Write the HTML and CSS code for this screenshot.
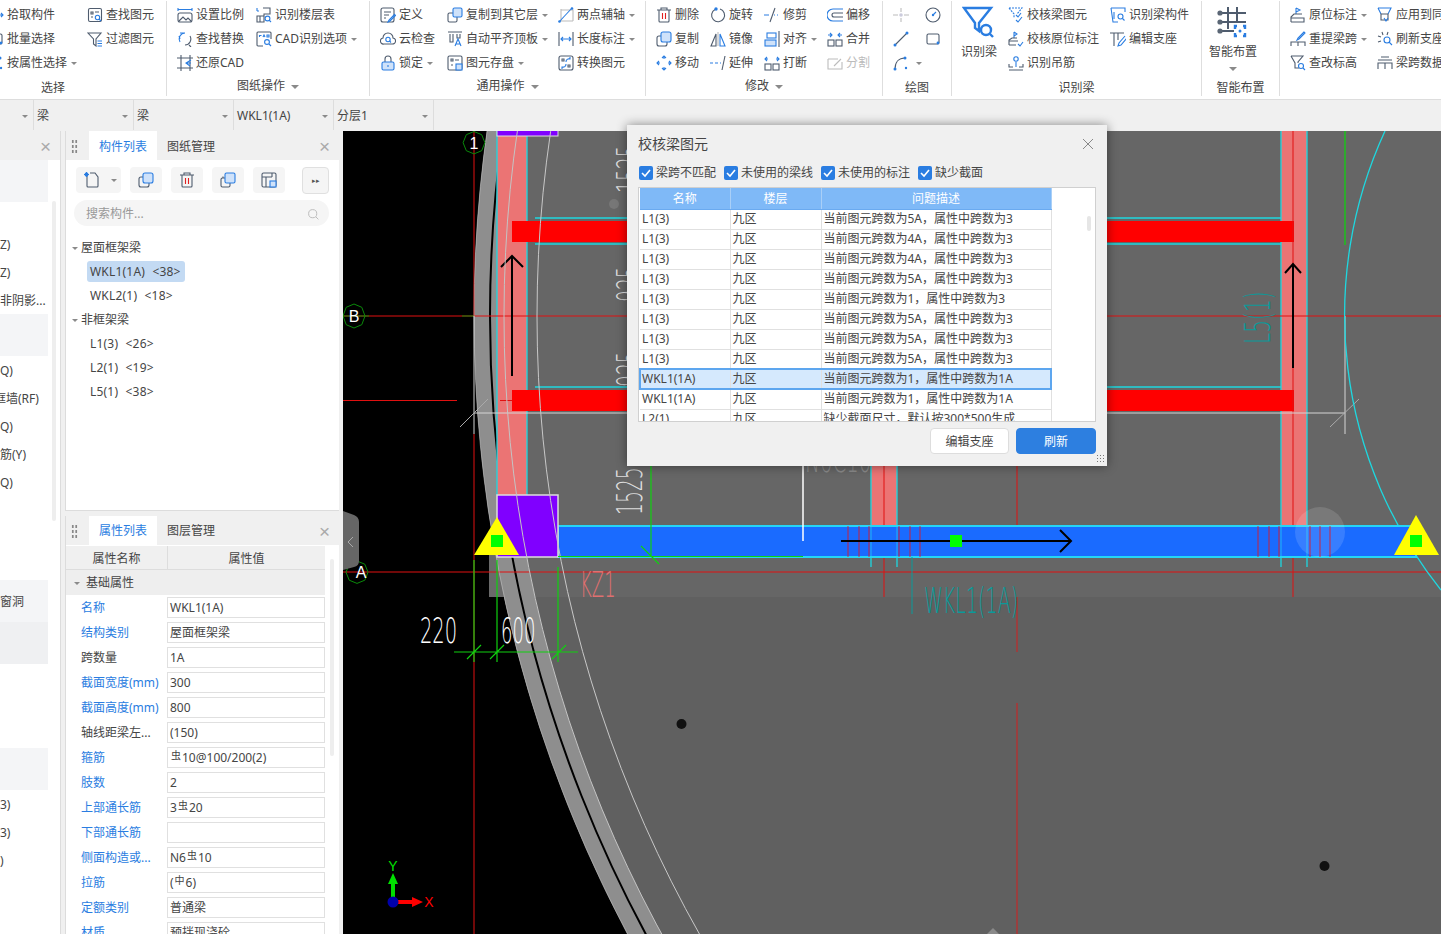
FILE: index.html
```html
<!DOCTYPE html>
<html lang="zh">
<head>
<meta charset="utf-8">
<title>校核梁图元</title>
<link rel="stylesheet" href="styles.css">
</head>
<body>
<svg class="defs" xmlns="http://www.w3.org/2000/svg">
<symbol id="i-find" viewBox="0 0 16 16"><rect class="d" x="1.500" y="1.500" width="13" height="13" rx="1.500"/><path class="d" d="M4 5h2v2H4zM8 5h4M4 10h2"/><circle class="b" cx="10.500" cy="10.500" r="2.200"/><path class="b" d="M12 12l2 2"/></symbol>
<symbol id="i-filter" viewBox="0 0 16 16"><path class="d" d="M1 2h13L9 8v7L6.500 13V8z"/><path class="b" d="M10.500 10h4.500M10.500 12.500h4.500M10.500 15h4.500"/></symbol>
<symbol id="i-scale" viewBox="0 0 16 16"><path class="b" d="M1 1v3M15 1v3M1 2.500h14"/><rect class="d" x="1" y="6" width="14" height="9" rx="2"/><path class="d" d="M2 14l4-4 3 3 2-2 3 3"/></symbol>
<symbol id="i-replace" viewBox="0 0 16 16"><path class="b" d="M8 2A6 6 0 0 0 3 11M2 5l1 3M3 2l5 0"/><path class="d" d="M8 14a6 6 0 0 0 5-9M12 14l2 2"/></symbol>
<symbol id="i-floor" viewBox="0 0 16 16"><path class="b" d="M1 1v3M1 4h2"/><path class="d" d="M7 1h7v6H8v8H1V9h7M4 9v6"/><circle class="b" cx="11.500" cy="11.500" r="2.400"/><path class="b" d="M13 13l2 2"/></symbol>
<symbol id="i-cad" viewBox="0 0 16 16"><path class="d" d="M7 15H2a1 1 0 0 1-1-1V2a1 1 0 0 1 1-1h12a1 1 0 0 1 1 1v6"/><path class="b" d="M3.500 6V4.500h2M7 6l1-2 1 2M11 4v2h2V4z"/><circle class="b" cx="11" cy="11" r="2.400"/><path class="b" d="M13 13l2 2"/></symbol>
<symbol id="i-restore" viewBox="0 0 16 16"><path class="d" d="M4 0v16M0 3h16M13 0v16M0 13h16"/><path class="b" d="M14 5L9 8l4 3M9 8h5"/></symbol>
<symbol id="i-define" viewBox="0 0 16 16"><rect class="d" x="1" y="1" width="13" height="14" rx="2"/><path class="d" d="M4 5h7M4 8h5M4 11h2"/><path class="b" d="M15 7l-6 6-1 2 2-1 6-6"/></symbol>
<symbol id="i-cloud" viewBox="0 0 16 16"><path class="d" d="M4 13a3 3 0 0 1-1-6 5 5 0 0 1 10 0 3 3 0 0 1-1 6z"/><circle class="b" cx="8" cy="8.500" r="2.200"/><path class="b" d="M9.500 10l1.500 1.500"/></symbol>
<symbol id="i-lock" viewBox="0 0 16 16"><path class="d" d="M5 7V4a3 3 0 0 1 6 0v3"/><rect class="l" x="2" y="7" width="12" height="8" rx="1.500"/><path class="b" d="M8 10v2"/></symbol>
<symbol id="i-copyto" viewBox="0 0 16 16"><rect class="d" x="1" y="6" width="9" height="9" rx="1.500"/><rect class="l" x="6" y="1" width="9" height="9" rx="1.500"/></symbol>
<symbol id="i-auto" viewBox="0 0 16 16"><path class="d" d="M1 1h14M3 3v8h3V3M10 3v4h3V3"/><path class="b" d="M8 15l3-7 3 7M9 13h4"/></symbol>
<symbol id="i-save" viewBox="0 0 16 16"><rect class="d" x="1" y="1" width="14" height="14" rx="1.500"/><path class="d" d="M4 4h2v2H4zM8 5h4M4 10h2"/><rect class="l" x="9" y="9" width="6" height="6"/></symbol>
<symbol id="i-twopt" viewBox="0 0 16 16"><path class="g" d="M2 14h13M3 2v12M3 3h12v11"/><path class="b" d="M1 15L14 1"/><circle class="bf" cx="1.500" cy="14.500" r="1.300"/><circle class="bf" cx="14" cy="1.500" r="1.300"/></symbol>
<symbol id="i-dim" viewBox="0 0 16 16"><path class="d" d="M1 1v14M15 1v14"/><path class="b" d="M3 8h10M5 6L3 8l2 2M11 6l2 2-2 2"/></symbol>
<symbol id="i-convert" viewBox="0 0 16 16"><rect class="d" x="1" y="1" width="14" height="14" rx="2"/><path class="d" d="M4 4h2v2H4zM10 10h2v2h-2z"/><path class="b" d="M8 7a3 3 0 0 1 4-3M12 2v2h-2M8 9a3 3 0 0 1-4 3M4 14v-2h2"/></symbol>
<symbol id="i-del" viewBox="0 0 16 16"><path class="d" d="M1 3h14M5 3V1h6v2M3 3v11a1 1 0 0 0 1 1h8a1 1 0 0 0 1-1V3"/><path class="r" d="M6.500 6v6M9.500 6v6"/></symbol>
<symbol id="i-rotate" viewBox="0 0 16 16"><path class="d" d="M10 2a6.500 6.500 0 1 1-5 .5"/><circle class="bf" cx="6" cy="2" r="1.700"/></symbol>
<symbol id="i-trim" viewBox="0 0 16 16"><path class="d" d="M11 1L6 15"/><path class="b" d="M0 8h5M10 8h1M13 8h1"/></symbol>
<symbol id="i-offset" viewBox="0 0 16 16"><path class="b" d="M16 2H6a6 6 0 0 0 0 12h10"/><path class="d" d="M16 6H7a2 2 0 0 0 0 4h9"/></symbol>
<symbol id="i-copy" viewBox="0 0 16 16"><rect class="d" x="1" y="5" width="10" height="10" rx="2"/><rect class="l" x="5" y="1" width="10" height="10" rx="2"/></symbol>
<symbol id="i-mirror" viewBox="0 0 16 16"><path class="g" d="M8 1v14"/><path class="d" d="M6 3L1 15h5z"/><path class="b" d="M10 3l5 12h-5z"/></symbol>
<symbol id="i-align" viewBox="0 0 16 16"><path class="d" d="M15 0v16"/><rect class="b" x="3" y="2" width="9" height="5"/><rect class="l" x="1" y="9" width="11" height="6"/></symbol>
<symbol id="i-merge" viewBox="0 0 16 16"><rect class="d" x="1" y="9" width="6" height="6"/><rect class="d" x="9" y="9" width="6" height="6"/><path class="b" d="M3 2l2 2-2 2M13 2l-2 2 2 2M1 4h4M15 4h-4"/></symbol>
<symbol id="i-move" viewBox="0 0 16 16"><path class="b" d="M8 1v3M8 12v3M1 8h3M12 8h3M6 3l2-2 2 2M6 13l2 2 2-2M3 6L1 8l2 2M13 6l2 2-2 2"/></symbol>
<symbol id="i-extend" viewBox="0 0 16 16"><path class="b" d="M0 8h3M5 8h3M10 8h1"/><path class="d" d="M15 1l-3 14"/></symbol>
<symbol id="i-break" viewBox="0 0 16 16"><rect class="d" x="1" y="9" width="6" height="6"/><rect class="d" x="9" y="9" width="6" height="6"/><path class="b" d="M3 2L1 4l2 2M13 2l2 2-2 2M1 4h3M15 4h-3"/></symbol>
<symbol id="i-split" viewBox="0 0 16 16"><path class="g" d="M1 4h10M1 4v10h14V7M7 11l7-7"/></symbol>
<symbol id="i-pt" viewBox="0 0 16 16"><path class="g" d="M0 8h5M11 8h5M8 1v4M8 11v4"/><circle cx="8" cy="8" r="1.800" fill="#ccd"/></symbol>
<symbol id="i-circle" viewBox="0 0 16 16"><circle class="d" cx="8" cy="8" r="7"/><path class="b" d="M8 8l3-3"/><circle class="bf" cx="8" cy="8" r="1.200"/></symbol>
<symbol id="i-line" viewBox="0 0 16 16"><path class="d" d="M2 14L14 2"/><circle class="bf" cx="2" cy="14" r="1.500"/><circle class="bf" cx="14" cy="2" r="1.500"/></symbol>
<symbol id="i-rect" viewBox="0 0 16 16"><rect class="d" x="2" y="3" width="12" height="10" rx="1.500"/><circle class="bf" cx="13" cy="12" r="1.400"/></symbol>
<symbol id="i-arc" viewBox="0 0 16 16"><path class="d" d="M2 14C2 7 6 3 12 3"/><circle class="bf" cx="2" cy="14" r="1.500"/><circle class="bf" cx="12" cy="3" r="1.500"/><circle class="bf" cx="13" cy="13" r="1.200"/></symbol>
<symbol id="i-bigfilter" viewBox="0 0 32 32"><path class="bt" d="M2 2h27L17 17v8L13 22V17z"/><circle class="bt" cx="24" cy="24" r="5"/><path class="bt" d="M28 28l3 3"/></symbol>
<symbol id="i-chk1" viewBox="0 0 16 16"><path class="bd" d="M1 1h13L9 7"/><path class="bd" d="M1 1l5 6v4"/><path class="b" d="M8 13l2 2 4-5M8 8l2 2 3-4"/></symbol>
<symbol id="i-chk2" viewBox="0 0 16 16"><path class="b" d="M6 1v6M6 1l3 2-3 2"/><path class="d" d="M1 14V9l3-2h5M1 10h9M1 14h7"/><path class="b" d="M10 13l2 2 3-4"/></symbol>
<symbol id="i-hang" viewBox="0 0 16 16"><circle class="b" cx="8" cy="4" r="2.200"/><path class="b" d="M8 7v5"/><path class="d" d="M1 9v3h4M15 9v3h-4M1 15h14"/></symbol>
<symbol id="i-beamq" viewBox="0 0 16 16"><path class="b" d="M1 1h14v4M1 1l2 14h5M4 5v7"/><circle class="b" cx="10.500" cy="9.500" r="2.500"/><path class="b" d="M12.500 11.500l2 2"/></symbol>
<symbol id="i-editseat" viewBox="0 0 16 16"><path class="d" d="M0 2h14M4 2v13M8 2v7"/><path class="b" d="M15 5l-6 7-1 3 3-1 6-7"/></symbol>
<symbol id="i-smart" viewBox="0 0 32 32"><path class="dt" d="M11 1v22M20 1v16M3 7h26M3 16h26M3 25h14"/><circle class="gf" cx="3" cy="7" r="2.600"/><circle class="gf" cx="3" cy="16" r="2.600"/><circle class="gf" cx="3" cy="25" r="2.600"/><path class="bt" d="M20 20h-2v3M26 20h2v3M20 30h-2v-3M26 30h2v-3"/><circle class="bf" cx="23" cy="25" r="1.500"/></symbol>
<symbol id="i-orig" viewBox="0 0 16 16"><path class="b" d="M6 1v6M6 1l4 2-4 2"/><path class="d" d="M1 15V10l3-3h8M1 11h13v4H1"/></symbol>
<symbol id="i-repick" viewBox="0 0 16 16"><path class="b" d="M14 1L8 7l-1 2 2-1 6-6z"/><path class="d" d="M1 15v-4h14v4M8 11v4"/></symbol>
<symbol id="i-checkh" viewBox="0 0 16 16"><path class="d" d="M1 1h12L8 7v1M1 1l4 7v5h4"/><circle class="b" cx="11" cy="11" r="2.500"/><path class="b" d="M13 13l2 2"/></symbol>
<symbol id="i-apply" viewBox="0 0 16 16"><path class="b" d="M1 1h13l-3 6M1 1l3 6"/><path class="d" d="M4 7h7v6H4z"/><path class="b" d="M7 11l2 3 2-3"/></symbol>
<symbol id="i-refresh" viewBox="0 0 16 16"><path class="d" d="M5 1l1 3M1 5l3 1M1 11l3-1M11 1l-1 3"/><circle class="b" cx="10" cy="9" r="3"/><path class="b" d="M12 11l3 3"/></symbol>
<symbol id="i-span" viewBox="0 0 16 16"><path class="d" d="M1 5h14M1 14V8h14v6M8 8v6M4 2h8"/></symbol>
<symbol id="i-newdoc" viewBox="0 0 16 16"><path class="d" d="M3 4v10a1 1 0 0 0 1 1h9a1 1 0 0 0 1-1V5l-3-4H6"/><path class="b" d="M1 1l3 3M4 1L1 4M2.500 0v5M0 2.500h5"/></symbol>
<symbol id="i-copy2" viewBox="0 0 16 16"><rect class="d" x="1" y="6" width="9" height="9" rx="1.500"/><path class="d" d="M3 6V4.500"/><rect class="l" x="5" y="1" width="10" height="10" rx="1.500"/></symbol>
<symbol id="i-floorp" viewBox="0 0 16 16"><rect class="d" x="1" y="1" width="14" height="14" rx="1.500"/><path class="d" d="M1 5h10M5 5v10M11 1v4"/><rect class="l" x="9" y="9" width="6" height="6"/></symbol>
<symbol id="i-search" viewBox="0 0 16 16"><circle cx="7" cy="7" r="5" fill="none" stroke="#bbb" stroke-width="1.200"/><path d="M11 11l3 3" stroke="#bbb" stroke-width="1.200"/></symbol>
<symbol id="i-check" viewBox="0 0 14 14"><rect width="14" height="14" rx="2" fill="#2a7de1"/><path d="M3 7l3 3 5-6" fill="none" stroke="#fff" stroke-width="1.600"/></symbol>
</svg>

<header class="ribbon">
  <section class="group g1">
    <div class="gbody">
      <div class="col c99">
        <div class="item"><svg class="ic"><use href="#i-move"/></svg>拾取构件</div>
        <div class="item"><svg class="ic"><use href="#i-rect"/></svg>批量选择</div>
        <div class="item"><svg class="ic"><use href="#i-arc"/></svg>按属性选择<i class="caret"></i></div>
      </div>
      <div class="col">
        <div class="item"><svg class="ic"><use href="#i-find"/></svg>查找图元</div>
        <div class="item"><svg class="ic"><use href="#i-filter"/></svg>过滤图元</div>
      </div>
    </div>
    <div class="glabel">选择</div>
  </section>
  <section class="group g2">
    <div class="gbody">
      <div class="col c79">
        <div class="item"><svg class="ic"><use href="#i-scale"/></svg>设置比例</div>
        <div class="item"><svg class="ic"><use href="#i-replace"/></svg>查找替换</div>
        <div class="item"><svg class="ic"><use href="#i-restore"/></svg>还原CAD</div>
      </div>
      <div class="col">
        <div class="item"><svg class="ic"><use href="#i-floor"/></svg>识别楼层表</div>
        <div class="item"><svg class="ic"><use href="#i-cad"/></svg>CAD识别选项<i class="caret"></i></div>
      </div>
    </div>
    <div class="glabel">图纸操作<i class="caret big"></i></div>
  </section>
  <section class="group g3">
    <div class="gbody">
      <div class="col c67">
        <div class="item"><svg class="ic"><use href="#i-define"/></svg>定义</div>
        <div class="item"><svg class="ic"><use href="#i-cloud"/></svg>云检查</div>
        <div class="item"><svg class="ic"><use href="#i-lock"/></svg>锁定<i class="caret"></i></div>
      </div>
      <div class="col c111">
        <div class="item"><svg class="ic"><use href="#i-copyto"/></svg>复制到其它层<i class="caret"></i></div>
        <div class="item"><svg class="ic"><use href="#i-auto"/></svg>自动平齐顶板<i class="caret"></i></div>
        <div class="item"><svg class="ic"><use href="#i-save"/></svg>图元存盘<i class="caret"></i></div>
      </div>
      <div class="col">
        <div class="item"><svg class="ic"><use href="#i-twopt"/></svg>两点辅轴<i class="caret"></i></div>
        <div class="item"><svg class="ic"><use href="#i-dim"/></svg>长度标注<i class="caret"></i></div>
        <div class="item"><svg class="ic"><use href="#i-convert"/></svg>转换图元</div>
      </div>
    </div>
    <div class="glabel">通用操作<i class="caret big"></i></div>
  </section>
  <section class="group g4">
    <div class="gbody">
      <div class="col c54">
        <div class="item"><svg class="ic"><use href="#i-del"/></svg>删除</div>
        <div class="item"><svg class="ic"><use href="#i-copy"/></svg>复制</div>
        <div class="item"><svg class="ic"><use href="#i-move"/></svg>移动</div>
      </div>
      <div class="col c54">
        <div class="item"><svg class="ic"><use href="#i-rotate"/></svg>旋转</div>
        <div class="item"><svg class="ic"><use href="#i-mirror"/></svg>镜像</div>
        <div class="item"><svg class="ic"><use href="#i-extend"/></svg>延伸</div>
      </div>
      <div class="col c63">
        <div class="item"><svg class="ic"><use href="#i-trim"/></svg>修剪</div>
        <div class="item"><svg class="ic"><use href="#i-align"/></svg>对齐<i class="caret"></i></div>
        <div class="item"><svg class="ic"><use href="#i-break"/></svg>打断</div>
      </div>
      <div class="col">
        <div class="item"><svg class="ic"><use href="#i-offset"/></svg>偏移</div>
        <div class="item"><svg class="ic"><use href="#i-merge"/></svg>合并</div>
        <div class="item off"><svg class="ic"><use href="#i-split"/></svg>分割</div>
      </div>
    </div>
    <div class="glabel">修改<i class="caret big"></i></div>
  </section>
  <section class="group g5">
    <div class="gbody">
      <div class="col c32">
        <div class="item"><svg class="ic"><use href="#i-pt"/></svg></div>
        <div class="item"><svg class="ic"><use href="#i-line"/></svg></div>
        <div class="item"><svg class="ic"><use href="#i-arc"/></svg><i class="caret"></i></div>
      </div>
      <div class="col">
        <div class="item"><svg class="ic"><use href="#i-circle"/></svg></div>
        <div class="item"><svg class="ic"><use href="#i-rect"/></svg></div>
      </div>
    </div>
    <div class="glabel">绘图</div>
  </section>
  <section class="group g6">
    <div class="gbody">
      <div class="bigitem c46"><svg class="icbig"><use href="#i-bigfilter"/></svg><span>识别梁</span></div>
      <div class="col c102">
        <div class="item"><svg class="ic"><use href="#i-chk1"/></svg>校核梁图元</div>
        <div class="item"><svg class="ic"><use href="#i-chk2"/></svg>校核原位标注</div>
        <div class="item"><svg class="ic"><use href="#i-hang"/></svg>识别吊筋</div>
      </div>
      <div class="col">
        <div class="item"><svg class="ic"><use href="#i-beamq"/></svg>识别梁构件</div>
        <div class="item"><svg class="ic"><use href="#i-editseat"/></svg>编辑支座</div>
      </div>
    </div>
    <div class="glabel">识别梁</div>
  </section>
  <section class="group g7">
    <div class="gbody">
      <div class="bigitem wide"><svg class="icbig"><use href="#i-smart"/></svg><span>智能布置</span><i class="caret big"></i></div>
    </div>
    <div class="glabel">智能布置</div>
  </section>
  <section class="group g8">
    <div class="gbody">
      <div class="col c87">
        <div class="item"><svg class="ic"><use href="#i-orig"/></svg>原位标注<i class="caret"></i></div>
        <div class="item"><svg class="ic"><use href="#i-repick"/></svg>重提梁跨<i class="caret"></i></div>
        <div class="item"><svg class="ic"><use href="#i-checkh"/></svg>查改标高</div>
      </div>
      <div class="col">
        <div class="item"><svg class="ic"><use href="#i-apply"/></svg>应用到同名梁</div>
        <div class="item"><svg class="ic"><use href="#i-refresh"/></svg>刷新支座尺寸</div>
        <div class="item"><svg class="ic"><use href="#i-span"/></svg>梁跨数据复制</div>
      </div>
    </div>
  </section>
</header>

<nav class="selbar">
  <div class="sel first"><i class="caret"></i></div>
  <div class="sel">梁<i class="caret"></i></div>
  <div class="sel">梁<i class="caret"></i></div>
  <div class="sel">WKL1(1A)<i class="caret"></i></div>
  <div class="sel">分层1<i class="caret"></i></div>
</nav>

<main class="workspace">
  <aside class="nav">
    <div class="nav-head"><span class="x">×</span></div>
    <div class="nav-list">
      <div class="li hi"></div>
      <div class="li"></div>
      <div class="li">Z)</div>
      <div class="li">Z)</div>
      <div class="li">非阴影...</div>
      <div class="li hi"></div>
      <div class="li">Q)</div>
      <div class="li"><span class="neg">框墙(RF)</span></div>
      <div class="li">Q)</div>
      <div class="li">筋(Y)</div>
      <div class="li">Q)</div>
      <div class="gap84"></div>
      <div class="li hi">窗洞</div>
      <div class="li hi dk"></div>
      <div class="gap84"></div>
      <div class="li hi"></div>
      <div class="li">3)</div>
      <div class="li">3)</div>
      <div class="li">)</div>
    </div>
    <div class="nav-scroll"></div>
  </aside>

  <div class="panels">
    <section class="panel top">
      <div class="phead">
        <span class="grip"></span>
        <span class="tab on">构件列表</span><span class="tab">图纸管理</span>
        <span class="x">×</span>
      </div>
      <div class="tools">
        <span class="tbtn split"><svg class="ic"><use href="#i-newdoc"/></svg><i class="caret"></i></span>
        <span class="tbtn"><svg class="ic"><use href="#i-copy"/></svg></span>
        <span class="tbtn"><svg class="ic"><use href="#i-del"/></svg></span>
        <span class="tbtn"><svg class="ic"><use href="#i-copy2"/></svg></span>
        <span class="tbtn"><svg class="ic"><use href="#i-floorp"/></svg></span>
        <span class="tmore">▸▸</span>
      </div>
      <div class="search"><span>搜索构件...</span><svg class="ic sm"><use href="#i-search"/></svg></div>
      <div class="tree">
        <div class="node"><i class="caret"></i>屋面框架梁</div>
        <div class="leaf"><span class="pill">WKL1(1A) &lt;38&gt;</span></div>
        <div class="leaf"><span>WKL2(1) &lt;18&gt;</span></div>
        <div class="node"><i class="caret"></i>非框架梁</div>
        <div class="leaf"><span>L1(3) &lt;26&gt;</span></div>
        <div class="leaf"><span>L2(1) &lt;19&gt;</span></div>
        <div class="leaf"><span>L5(1) &lt;38&gt;</span></div>
      </div>
    </section>
    <section class="panel bottom">
      <div class="phead low">
        <span class="grip"></span>
        <span class="tab on">属性列表</span><span class="tab">图层管理</span>
        <span class="x">×</span>
      </div>
      <div class="props">
        <div class="phdr"><span>属性名称</span><span>属性值</span></div>
        <div class="pgroup"><i class="caret"></i>基础属性</div>
        <div class="prow link"><label>名称</label><span class="val">WKL1(1A)</span></div>
        <div class="prow link"><label>结构类别</label><span class="val">屋面框架梁</span></div>
        <div class="prow"><label>跨数量</label><span class="val">1A</span></div>
        <div class="prow link"><label>截面宽度(mm)</label><span class="val">300</span></div>
        <div class="prow link"><label>截面高度(mm)</label><span class="val">800</span></div>
        <div class="prow"><label>轴线距梁左...</label><span class="val">(150)</span></div>
        <div class="prow link"><label>箍筋</label><span class="val"><sup>虫</sup>10@100/200(2)</span></div>
        <div class="prow link"><label>肢数</label><span class="val">2</span></div>
        <div class="prow link"><label>上部通长筋</label><span class="val">3<sup>虫</sup>20</span></div>
        <div class="prow link"><label>下部通长筋</label><span class="val"></span></div>
        <div class="prow link"><label>侧面构造或...</label><span class="val">N6<sup>虫</sup>10</span></div>
        <div class="prow link"><label>拉筋</label><span class="val">(<sup>中</sup>6)</span></div>
        <div class="prow link"><label>定额类别</label><span class="val">普通梁</span></div>
        <div class="prow link"><label>材质</label><span class="val">预拌现浇砼</span></div>
      </div>
      <div class="pscroll"></div>
    </section>
  </div>

  <div class="canvas">
    <svg class="cad" viewBox="343 131 1098 803" xmlns="http://www.w3.org/2000/svg">
      <rect x="343" y="131" width="1098" height="803" fill="#000"/>
      <circle cx="1794" cy="316" r="1320" fill="#666"/>
      <path d="M504 597A1320 1320 0 0 0 627 934H1441V597Z" fill="#606060"/>
      <rect x="489" y="540" width="40" height="57" fill="#6a6a6a"/>
      <circle cx="1794" cy="316" r="1305" fill="none" stroke="#8e8e8e" stroke-width="30"/>
      <circle cx="1794" cy="316" r="1304" fill="none" stroke="#000" stroke-width="2"/>

      <g fill="#eb7474">
        <rect x="497" y="131" width="30" height="364"/>
        <rect x="871" y="440" width="26" height="86"/>
        <rect x="1281" y="131" width="26" height="395"/>
      </g>
      <g stroke="#1ed8e0" stroke-width="1.300">
        <path d="M497 131V495M527 131V495M871 440V567M897 440V567M1281 131V567M1307 131V567"/>
        <path d="M535 218H1281M535 244H1281M535 387H1281"/>
      </g>
      <g fill="#f00">
        <rect x="512" y="221" width="782" height="21"/>
        <rect x="512" y="390" width="782" height="21"/>
      </g>

      <g stroke="#e01010" fill="none">
        <path d="M343 316H1441M343 572H1441M343 400.500H457M500 400.500H512"/>
        <path d="M474 131V316M474 434V934M884 440V597M1293 131V597M1017 465V548"/>
      </g>
      <path d="M1017 597V652M1017 703V934" stroke="#c02a2a" stroke-width="1.200"/>
      <path d="M343 316h26M462 316h12" stroke="#0a8a0a"/>
      <path d="M474 316V434M1345 316V434M474 413H1345" stroke="#d5d5d5" fill="none"/>
      <path d="M460 427L488 399M1330 427L1359 399" stroke="#aaa"/>
      <path d="M1345 131V245" stroke="#10d010" stroke-width="1.300"/>
      <path d="M1385 131A440 440 0 0 0 1441 590" fill="none" stroke="#1ed8e0" stroke-width="1.300"/>

      <g stroke="#000" stroke-width="2" fill="none">
        <path d="M512 376V257M501 267L512 256L523 267"/>
        <path d="M1293 368V264M1285 273L1293 264L1301 273"/>
      </g>

      <rect x="558" y="526" width="858" height="31" fill="#1a6bff" stroke="#25d5f5" stroke-width="2"/>
      <path d="M871 526V557M897 526V557M1281 526V557M1307 526V557" stroke="#25d5f5" opacity=".7"/>
      <circle cx="1320" cy="532" r="25" fill="#fff" opacity=".13"/>
      <path d="M848 526V557M859 526V557M869 526V557M899 526V557M910 526V557M920 526V557M1258 526V557M1269 526V557M1279 526V557M1310 526V557M1320 526V557M1330 526V557" stroke="#f01010" stroke-opacity=".8"/>
      <path d="M841 541H1071M1060 530L1071 541L1060 552" fill="none" stroke="#000" stroke-width="2"/>
      <rect x="950" y="535" width="12" height="12" fill="#0f0"/>

      <rect x="497" y="495" width="61" height="62" fill="#8000ff" stroke="#ddd" stroke-width="1.500"/>
      <rect x="497" y="126" width="61" height="10" fill="#8000ff" stroke="#ddd" stroke-width="1"/>
      <circle cx="1794" cy="316" r="1290" fill="none" stroke="#c4c4c4"/>
      <circle cx="1794" cy="316" r="1257" fill="none" stroke="#c8c8c8"/>
      <circle cx="1794" cy="316" r="1320" fill="none" stroke="#ccc" stroke-opacity=".5"/>
      <path d="M497 517L519 555H474Z" fill="#ff0"/>
      <path d="M1416 515L1439 555H1394Z" fill="#ff0"/>
      <rect x="491" y="535" width="12" height="12" fill="#0f0"/>
      <rect x="1410" y="535" width="12" height="12" fill="#0f0"/>

      <path d="M803 462V541" stroke="#fff" stroke-width="1.500"/>
      <g stroke="#10d010" fill="none" stroke-width="1.200">
        <path d="M558 556.500H803M651 460V556M641 546L659 564"/>
        <path d="M454 652H578M474 560V662M497 560V662M558 567V662M467 659L481 645M490 659L504 645M552 659L566 645"/>
      </g>

      <g class="cadt">
        <text transform="translate(420 643) scale(.54 1)" fill="#fff">220</text>
        <text transform="translate(501 643) scale(.5 1)" fill="#fff">600</text>
        <text transform="translate(580 597) scale(.5 1)" fill="#e07070">KZ1</text>
        <text transform="translate(924 613) scale(.53 1)" fill="#0a9a9a">WKL1(1A)</text>
        <text transform="translate(642 515) rotate(-90) scale(.52 1)" fill="#ddd">1525</text>
        <text transform="translate(642 193) rotate(-90) scale(.52 1)" fill="#ddd">1525</text>
        <text transform="translate(642 302) rotate(-90) scale(.52 1)" fill="#ddd">925</text>
        <text transform="translate(642 387) rotate(-90) scale(.52 1)" fill="#ddd">925</text>
        <text transform="translate(1270 344) rotate(-90) scale(.56 1)" fill="#0a9a9a">L5(1)</text>
        <text transform="translate(805 472) scale(.55 1)" fill="#8a8a8a">N6C10</text>
      </g>
      <path d="M912 557V614" stroke="#0a9a9a"/>

      <g fill="none" stroke="#0a8a0a">
        <path d="M474 131.500l7.700 3.200 3.200 8-3.200 8-7.700 3.200-7.700-3.200-3.200-8 3.200-8z"/>
        <path d="M354 304l7.800 3.300 3.200 8.700-3.200 8.700-7.800 3.300-7.800-3.300-3.200-8.700 3.200-8.700z"/>
        <path d="M357 561l7.800 3.200 3.200 8-3.200 8-7.800 3.200-7.800-3.200-3.200-8 3.200-8z"/>
      </g>
      <g class="bubble" fill="#fff">
        <text x="474" y="149">1</text>
        <text x="354" y="322">B</text>
        <text x="361" y="578">A</text>
      </g>

      <circle cx="681.500" cy="724" r="5" fill="#111"/>
      <circle cx="1324.500" cy="866" r="5" fill="#111"/>
      <circle cx="614" cy="204" r="5" fill="#777"/>
      <path d="M987 934L993 928L999 934Z" fill="#8a8a8a"/>

      <path d="M393 900V882" stroke="#00e000" stroke-width="4"/>
      <path d="M388 884L393 873L398 884Z" fill="#00e000"/>
      <path d="M393 902H412" stroke="#f00" stroke-width="4"/>
      <path d="M412 897L423 902L412 907Z" fill="#f00"/>
      <circle cx="393" cy="902" r="5.500" fill="#0000aa"/>
      <text class="axis" x="393" y="871" fill="#00e000">Y</text>
      <text class="axis" x="429" y="907" fill="#f00">X</text>

      <path d="M343 511L354 515Q359 517 359 522V561Q359 566 354 567L343 570Z" fill="#666"/>
      <path d="M353 537L348 542L353 547" fill="none" stroke="#aaa"/>
    </svg>
  </div>
</main>

<section class="dialog">
  <div class="dhead"><span>校核梁图元</span><svg class="dx" viewBox="0 0 12 12"><path d="M1 1l10 10M11 1L1 11"/></svg></div>
  <div class="checks">
    <label class="chk c1"><svg class="cb"><use href="#i-check"/></svg>梁跨不匹配</label>
    <label class="chk c2"><svg class="cb"><use href="#i-check"/></svg>未使用的梁线</label>
    <label class="chk c3"><svg class="cb"><use href="#i-check"/></svg>未使用的标注</label>
    <label class="chk"><svg class="cb"><use href="#i-check"/></svg>缺少截面</label>
  </div>
  <div class="tbl">
    <table>
      <thead><tr><th>名称</th><th>楼层</th><th>问题描述</th></tr></thead>
      <tbody>
        <tr><td>L1(3)</td><td>九区</td><td>当前图元跨数为5A，属性中跨数为3</td></tr>
        <tr><td>L1(3)</td><td>九区</td><td>当前图元跨数为4A，属性中跨数为3</td></tr>
        <tr><td>L1(3)</td><td>九区</td><td>当前图元跨数为4A，属性中跨数为3</td></tr>
        <tr><td>L1(3)</td><td>九区</td><td>当前图元跨数为5A，属性中跨数为3</td></tr>
        <tr><td>L1(3)</td><td>九区</td><td>当前图元跨数为1，属性中跨数为3</td></tr>
        <tr><td>L1(3)</td><td>九区</td><td>当前图元跨数为5A，属性中跨数为3</td></tr>
        <tr><td>L1(3)</td><td>九区</td><td>当前图元跨数为5A，属性中跨数为3</td></tr>
        <tr><td>L1(3)</td><td>九区</td><td>当前图元跨数为5A，属性中跨数为3</td></tr>
        <tr class="sel-row"><td>WKL1(1A)</td><td>九区</td><td>当前图元跨数为1，属性中跨数为1A</td></tr>
        <tr><td>WKL1(1A)</td><td>九区</td><td>当前图元跨数为1，属性中跨数为1A</td></tr>
        <tr><td>L2(1)</td><td>九区</td><td>缺少截面尺寸，默认按300*500生成</td></tr>
      </tbody>
    </table>
    <span class="tscroll"></span>
  </div>
  <div class="dfoot">
    <button class="btn">编辑支座</button>
    <button class="btn pri">刷新</button>
  </div>
  <span class="resize"></span>
</section>
</body>
</html>
```

FILE: styles.css
```css
html, body { margin: 0; padding: 0; width: 1441px; height: 934px; overflow: hidden; background: #f0f0f0; }
body { font: 12px/1.2 "Noto Sans", "Noto Sans CJK SC", sans-serif; color: #454545; position: relative; }
.defs { position: absolute; width: 0; height: 0; }
.d { fill: none; stroke: #4f5c6e; stroke-width: 1.100; }
.b { fill: none; stroke: #2a7de1; stroke-width: 1.100; }
.bd { fill: none; stroke: #2a7de1; stroke-width: 1.100; stroke-dasharray: 2 1; }
.l { fill: #cfe2fa; stroke: #2a7de1; stroke-width: 1.100; }
.g { fill: none; stroke: #bcbcbc; stroke-width: 1.100; }
.r { fill: none; stroke: #e02020; stroke-width: 1.100; }
.bf { fill: #2a7de1; }
.gf { fill: #5a6675; }
.bt { fill: none; stroke: #2a7de1; stroke-width: 2.400; }
.dt { fill: none; stroke: #4f5c6e; stroke-width: 2; }

.ribbon { height: 99px; display: flex; background: #fff; border-bottom: 1px solid #ddd; overflow: hidden; }
.group { flex: none; height: 95px; margin-top: 1px; box-sizing: border-box; border-right: 1px solid #dedede; display: flex; flex-direction: column; padding-left: 10px; }
.g1 { margin-left: -60px; width: 227px; padding-left: 48px; }
.g2 { width: 203px; }
.g3 { width: 276px; }
.g4 { width: 237px; }
.g5 { width: 69px; }
.g6 { width: 250px; }
.g7 { width: 78px; padding-left: 0; }
.g8 { width: 260px; border-right: 0; }
.gbody { display: flex; flex: none; height: 74px; padding-top: 2px; }
.glabel { flex: none; height: 22px; line-height: 22px; text-align: center; white-space: nowrap; margin-left: -10px; }
.g2 .glabel, .g3 .glabel, .g4 .glabel { margin-top: -2px; }
.g1 .glabel { margin-left: -48px; }
.g7 .glabel { margin-left: 0; }
.col { display: flex; flex-direction: column; flex: none; }
.c32 { width: 32px; } .c46 { width: 46px; } .c54 { width: 54px; } .c63 { width: 63px; } .c67 { width: 67px; }
.c79 { width: 79px; } .c87 { width: 87px; } .c99 { width: 99px; } .c102 { width: 102px; } .c111 { width: 111px; }
.item { height: 24px; display: flex; align-items: center; white-space: nowrap; }
.item.off { color: #bbb; }
.ic { width: 16px; height: 16px; margin-right: 3px; flex: none; }
.icbig { width: 32px; height: 32px; display: block; }
.bigitem { display: flex; flex-direction: column; align-items: flex-start; white-space: nowrap; padding-top: 3px; }
.bigitem span { margin-top: 7px; margin-left: -1px; }
.bigitem.wide { width: 62px; align-items: center; }
.bigitem.wide span { margin-left: 0; }
.bigitem.wide .caret { margin: 8px 0 0; }
.caret { display: inline-block; width: 0; height: 0; border: 3px solid transparent; border-top: 3.500px solid #8a8a8a; border-bottom: 0; margin-left: 4px; flex: none; vertical-align: middle; }
.caret.big { border-width: 4px; border-bottom: 0; margin-left: 6px; }

.selbar { height: 31px; display: flex; background: #f0f0f0; box-sizing: border-box; }
.sel { width: 100px; box-sizing: border-box; height: 30px; display: flex; align-items: center; justify-content: space-between; padding: 2px 5px 0 3px; border-right: 1px solid #ddd; }
.sel.first { width: 34px; justify-content: flex-end; }

.workspace { display: flex; height: 804px; background: #f0f0f0; }
.nav { width: 61px; flex: none; background: #fff; position: relative; border-right: 1px solid #dcdcdc; box-sizing: border-box; overflow: hidden; }
.nav-head { height: 29px; background: #f0f0f0; text-align: right; padding-right: 9px; }
.x { color: #aaa; font-size: 19px; line-height: 31px; font-family: "Liberation Sans", sans-serif; font-weight: 400; }
.nav-list { width: 48px; }
.li { height: 28px; line-height: 30px; white-space: nowrap; }
.li.hi { height: 42px; background: #f4f5f7; line-height: 44px; }
.li.dk { background: #eff0f2; }
.neg { margin-left: -6px; }
.gap84 { height: 84px; }
.nav-scroll { position: absolute; left: 52px; top: 70px; width: 4px; height: 320px; background: #eee; border-radius: 2px; }

.panels { width: 278px; margin-left: 4px; flex: none; display: flex; flex-direction: column; background: #f0f0f0; }
.panel { background: #fff; position: relative; width: 274px; border-left: 1px solid #dcdcdc; box-sizing: border-box; }
.panel.top { height: 380px; border-bottom: 1px solid #dcdcdc; }
.panel.bottom { margin-top: 5px; flex: 1; overflow: hidden; }
.phead { height: 29px; background: #f0f0f0; display: flex; align-items: stretch; padding-left: 23px; position: relative; }
.grip { position: absolute; left: 5px; top: 8px; height: 14px; background-image: radial-gradient(circle, #888 1.200px, transparent 1.300px); background-size: 3.500px 5px; width: 7px; }
.tab { width: 68px; text-align: center; line-height: 31px; }
.phead.low .tab { line-height: 29px; }
.tab.on { background: #fff; color: #2a7de1; }
.phead .x { margin-left: auto; margin-right: 9px; }
.tools { display: flex; gap: 9px; padding: 7px 0 0 10px; height: 26px; align-items: stretch; }
.tbtn { width: 32px; height: 26px; background: #f5f5f5; border-radius: 4px; display: flex; align-items: center; justify-content: center; }
.tbtn .ic { margin: 0; }
.tbtn.split { width: 45px; justify-content: flex-start; padding-left: 8px; box-sizing: border-box; }
.tbtn.split .caret { margin-left: 11px; }
.tmore { width: 25px; height: 25px; border: 1px solid #e0e0e0; border-radius: 4px; background: #f5f5f5; margin-left: 8px; font-size: 7px; line-height: 25px; text-align: center; color: #555; }
.search { margin: 7px 0 0 8px; width: 255px; height: 26px; border-radius: 13px; background: #f5f5f5; color: #999; display: flex; align-items: center; justify-content: space-between; padding: 2px 9px 0 12px; box-sizing: border-box; }
.ic.sm { width: 13px; height: 13px; margin: 0; }
.tree { padding: 10px 0 0 6px; }
.node { height: 24px; line-height: 24px; }
.node .caret { margin: 0 3px 0 0; }
.leaf { height: 24px; line-height: 24px; padding-left: 18px; white-space: pre; }
.leaf span { display: inline-block; height: 21px; line-height: 21px; padding: 0 4px 0 3px; margin-left: -3px; margin-top: 1px; word-spacing: 4px; letter-spacing: .2px; }
.leaf .pill { background: #c3daf3; border-radius: 3px; }

.props { width: 259px; margin-top: 1px; }
.phdr { display: flex; height: 24px; background: #f0f0f0; line-height: 25px; text-align: center; box-sizing: border-box; border-bottom: 1px solid #ddd; }
.phdr span:first-child { width: 101px; border-right: 1px solid #ddd; }
.phdr span:last-child { flex: 1; }
.pgroup { height: 25px; line-height: 25px; background: #eee; padding-left: 8px; }
.pgroup .caret { margin: 0 6px 0 0; }
.prow { height: 25px; display: flex; align-items: center; padding-left: 15px; }
.prow label { width: 86px; flex: none; white-space: nowrap; padding-top: 2px; }
.prow.link label { color: #2a7de1; }
.val { width: 158px; height: 21px; box-sizing: border-box; border: 1px solid #e0e0e0; line-height: 19px; padding-left: 2px; white-space: nowrap; flex: none; }
.val sup { font-size: 10px; line-height: 0; vertical-align: 3px; margin: 0 1px; }
.pscroll { position: absolute; left: 264px; top: 43px; width: 4px; height: 197px; background: #eee; border-radius: 2px; }

.canvas { flex: 1; min-width: 0; height: 803px; }
.cad { display: block; width: 100%; height: 803px; }
.cadt text { font: 200 36px "DejaVu Sans", sans-serif; }
.bubble text { font: 16px "Liberation Sans", sans-serif; text-anchor: middle; }
.axis { font: 14px "Liberation Sans", sans-serif; text-anchor: middle; }

.dialog { position: absolute; left: 627px; top: 125px; width: 480px; height: 341px; background: #f0f0f0; box-shadow: 0 0 10px rgba(0,0,0,.45); box-sizing: border-box; padding: 0 11px; }
.dhead { height: 37px; display: flex; align-items: center; justify-content: space-between; font-size: 14px; padding: 1px 2px 0 0; box-sizing: border-box; }
.dx { width: 12px; height: 12px; }
.dx path { stroke: #888; fill: none; }
.checks { display: flex; height: 25px; padding-left: 1px; align-items: flex-start; padding-top: 4px; box-sizing: border-box; }
.chk { display: flex; align-items: center; white-space: nowrap; margin-right: 8px; height: 14px; }
.c1 { width: 77px; } .c2 { width: 89px; } .c3 { width: 89px; }
.cb { width: 14px; height: 14px; margin-right: 3px; flex: none; }
.tbl { position: relative; width: 458px; height: 235px; background: #fff; border: 1px solid #d0d0d0; box-sizing: border-box; overflow: hidden; }
.tbl table { border-collapse: collapse; table-layout: fixed; width: 413px; }
.tbl th { background: #7fb9f7; color: #fff; font-weight: 400; height: 21px; padding: 2px 0 0; border-right: 1px solid #a9cff7; border-bottom: 1px solid #6aaaf0; box-sizing: border-box; }
.tbl th:nth-child(1), .tbl td:nth-child(1) { width: 90px; }
.tbl th:nth-child(2), .tbl td:nth-child(2) { width: 91px; }
.tbl td { height: 20px; padding: 0 0 0 2px; border-right: 1px solid #e0e0e0; border-bottom: 1px solid #e0e0e0; box-sizing: border-box; white-space: nowrap; line-height: 18px; overflow: hidden; }
.tbl tr.sel-row td { background: #d5e9fd; border-top: 2px solid #5da6ef; border-bottom: 2px solid #5da6ef; }
.tbl tr.sel-row td:first-child { border-left: 2px solid #5da6ef; padding-left: 1px; }
.tbl tr.sel-row td:last-child { border-right: 2px solid #5da6ef; }
.tscroll { position: absolute; left: 448px; top: 28px; width: 4px; height: 15px; background: #e6e6e6; border-radius: 2px; }
.dfoot { display: flex; justify-content: flex-end; gap: 7px; margin-top: 6px; }
.btn { font: 12px "Noto Sans", "Noto Sans CJK SC", sans-serif; width: 79px; height: 26px; background: #fff; border: 1px solid #ddd; border-radius: 4px; color: #454545; padding: 0; }
.btn.pri { width: 80px; background: #2d7fe0; border-color: #2d7fe0; color: #fff; }
.resize { position: absolute; right: 3px; bottom: 4px; width: 8px; height: 8px; background-image: radial-gradient(circle, #777 .9px, transparent 1px); background-size: 3px 3px; }
```
